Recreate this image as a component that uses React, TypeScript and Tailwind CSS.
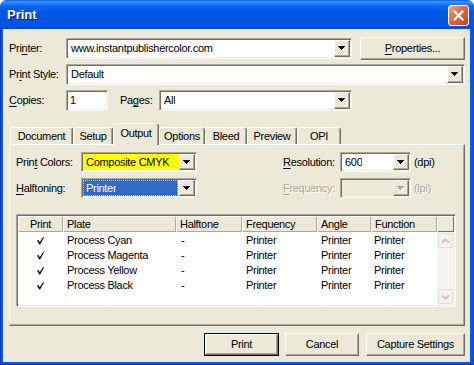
import React from "react";

const sunken =
  "border border-t-[#ACA899] border-l-[#ACA899] border-b-white border-r-white shadow-[inset_1px_1px_0_#716F64,inset_-1px_-1px_0_#F1EFE2]";
const raised =
  "border border-t-white border-l-white border-b-[#716F64] border-r-[#716F64] shadow-[inset_-1px_-1px_0_#ACA899]";

const U = ({ children }: { children: React.ReactNode }) => (
  <span className="underline underline-offset-[2px]">{children}</span>
);

const DropButton = ({ disabled = false }: { disabled?: boolean }) => (
  <div className={`flex w-[16px] shrink-0 items-center justify-center bg-[#ECE9D8] ${raised}`}>
    <svg width="8" height="5" viewBox="0 0 8 5" shapeRendering="crispEdges">
      {disabled && (
        <g fill="#fff">
          <rect x="1" y="1" width="7" height="1" />
          <rect x="2" y="2" width="5" height="1" />
          <rect x="3" y="3" width="3" height="1" />
          <rect x="4" y="4" width="1" height="1" />
        </g>
      )}
      <g fill={disabled ? "#ACA899" : "#000"}>
        <rect x="0" y="0" width="7" height="1" />
        <rect x="1" y="1" width="5" height="1" />
        <rect x="2" y="2" width="3" height="1" />
        <rect x="3" y="3" width="1" height="1" />
      </g>
    </svg>
  </div>
);

type ComboProps = {
  text?: string;
  className: string;
  bg?: string;
  selected?: boolean;
  disabled?: boolean;
};

const Combo = ({ text = "", className, bg = "bg-white", selected, disabled }: ComboProps) => (
  <div className={`flex shrink-0 p-[1px] ${sunken} ${bg} ${className}`}>
    <div
      className={`flex min-w-0 flex-1 items-center ${
        selected ? "mr-[1px] border border-dotted border-[#E8C070] bg-[#316AC5] pl-[2px] text-white" : "pl-[3px]"
      }`}
    >
      <span className="truncate">{text}</span>
    </div>
    <DropButton disabled={disabled} />
  </div>
);

const Button = ({ children, className, def }: { children: React.ReactNode; className: string; def?: boolean }) =>
  def ? (
    <div className={`flex border border-black ${className}`}>
      <div className={`flex flex-1 items-center justify-center bg-[#ECE9D8] ${raised}`}>{children}</div>
    </div>
  ) : (
    <div className={`flex items-center justify-center bg-[#ECE9D8] ${raised} ${className}`}>{children}</div>
  );

const tabs = [
  { label: "Document", w: "w-[63px]" },
  { label: "Setup", w: "w-[40px]" },
  { label: "Output", w: "w-[46px]", active: true },
  { label: "Options", w: "w-[46px]" },
  { label: "Bleed", w: "w-[42px]" },
  { label: "Preview", w: "w-[50px]" },
  { label: "OPI", w: "w-[44px]" },
];

const cols = [
  { label: "Print", w: "w-[45px]", center: true },
  { label: "Plate", w: "w-[113px]" },
  { label: "Halftone", w: "w-[66px]" },
  { label: "Frequency", w: "w-[75px]" },
  { label: "Angle", w: "w-[54px]" },
  { label: "Function", w: "w-[66px]" },
];

const plates = ["Process Cyan", "Process Magenta", "Process Yellow", "Process Black"];

const Check = () => (
  <svg width="7" height="8" viewBox="0 0 7 8">
    <path d="M0 3.6 L1.4 3 L2.7 5.2 L6.2 0 L7 0.6 L3.1 7.6 L2.3 7.6 Z" fill="#000" />
  </svg>
);

const Chevron = ({ down }: { down?: boolean }) => (
  <svg width="9" height="6" viewBox="0 0 9 6">
    <path
      d={down ? "M1 1.5 L4.5 4.5 L8 1.5" : "M1 4.5 L4.5 1.5 L8 4.5"}
      fill="none"
      stroke="#C8C5B8"
      strokeWidth="1.8"
    />
  </svg>
);

const ScrollBtn = ({ down }: { down?: boolean }) => (
  <div className="m-[1px] flex h-[15px] items-center justify-center rounded-[2px] border border-[#E2E0D6] bg-[#F3F2EC]">
    <Chevron down={down} />
  </div>
);

export default function App() {
  return (
    <div className="h-[365px] w-[474px] bg-white font-['Liberation_Sans',Arial,sans-serif] text-[11px] tracking-[-0.3px] text-black">
      <div className="flex h-full w-full flex-col overflow-hidden rounded-t-[7px] bg-[#0055E5]">
        {/* title bar */}
        <div className="flex h-[29px] shrink-0 items-center justify-between bg-[linear-gradient(180deg,#0A5DEB_0%,#3D95FF_6%,#2B84FB_11%,#0A66F0_20%,#0058E6_40%,#0054E3_75%,#0056E8_90%,#0048D2_100%)] pl-[7px] pr-[5px] pt-[1px]">
          <span className="text-[13px] font-bold tracking-normal text-white [text-shadow:1px_1px_0_#0A1E8C]">
            Print
          </span>
          <div className="flex h-[21px] w-[21px] items-center justify-center rounded-[3px] border border-white bg-[linear-gradient(135deg,#F0A486_0%,#E2693F_45%,#C7411B_100%)]">
            <svg width="11" height="11" viewBox="0 0 11 11">
              <path d="M1.5 1.5 L9.5 9.5 M9.5 1.5 L1.5 9.5" stroke="#fff" strokeWidth="2.2" strokeLinecap="square" />
            </svg>
          </div>
        </div>

        {/* frame + client */}
        <div className="flex flex-1 border-x border-b border-[#0A34C4] bg-[#0758E8] pb-[2px] pl-[2px] pr-[3px]">
          <div className="flex flex-1 flex-col bg-[#ECE9D8]">
            {/* row 1 */}
            <div className="mt-[8px] flex h-[23px] items-start pl-[6px]">
              <span className="w-[57px] self-center">
                Pri<U>n</U>ter:
              </span>
              <Combo text="www.instantpublishercolor.com" className="mt-[1px] h-[21px] w-[286px]" />
              <Button className="ml-[8px] h-[23px] w-[105px]">
                <span>
                  <U>P</U>roperties...
                </span>
              </Button>
            </div>
            {/* row 2 */}
            <div className="mt-[4px] flex h-[21px] items-center pl-[6px]">
              <span className="w-[57px]">
                Pr<U>i</U>nt Style:
              </span>
              <Combo text="Default" className="h-[21px] w-[399px]" />
            </div>
            {/* row 3 */}
            <div className="mt-[5px] flex h-[21px] items-center pl-[6px]">
              <span className="w-[57px]">
                <U>C</U>opies:
              </span>
              <div className={`flex h-[21px] w-[42px] items-center bg-white pl-[3px] ${sunken}`}>1</div>
              <span className="ml-[12px] w-[39px]">
                Pa<U>g</U>es:
              </span>
              <Combo text="All" className="h-[21px] w-[193px]" />
            </div>

            {/* tabs */}
            <div className="ml-[7px] mt-[12px] flex h-[21px] items-end">
              {tabs.map((t) =>
                t.active ? (
                  <div
                    key={t.label}
                    className={`relative z-10 -mb-[1px] flex h-[22px] items-center justify-center rounded-t-[3px] border-l border-r border-t border-l-white border-r-[#716F64] border-t-white bg-[#ECE9D8] pb-[3px] shadow-[inset_-1px_0_0_#ACA899] ${t.w}`}
                  >
                    {t.label}
                  </div>
                ) : (
                  <div
                    key={t.label}
                    className={`flex h-[17px] items-center justify-center rounded-t-[3px] border-l border-r border-t border-l-white border-r-[#716F64] border-t-white shadow-[inset_-1px_0_0_#ACA899] ${t.w}`}
                  >
                    {t.label}
                  </div>
                )
              )}
            </div>

            {/* panel */}
            <div className={`ml-[6px] mr-[5px] flex h-[182px] flex-col px-[6px] pt-[7px] ${raised}`}>
              <div className="flex h-[20px] items-center">
                <span className="w-[65px]">
                  Prin<U>t</U> Colors:
                </span>
                <Combo text="Composite CMYK" bg="bg-[#FFFF00]" className="h-[20px] w-[116px]" />
                <span className="ml-[86px] w-[57px]">
                  <U>R</U>esolution:
                </span>
                <Combo text="600" className="h-[20px] w-[71px]" />
                <span className="ml-[3px]">(dpi)</span>
              </div>
              <div className="mt-[6px] flex h-[20px] items-center">
                <span className="w-[65px]">
                  <U>H</U>alftoning:
                </span>
                <Combo text="Printer" selected className="h-[20px] w-[116px]" />
                <span className="ml-[86px] w-[57px] text-[#ACA899] [text-shadow:1px_1px_0_#fff]">
                  <U>F</U>requency:
                </span>
                <Combo disabled bg="bg-[#ECE9D8]" className="h-[20px] w-[71px]" />
                <span className="ml-[3px] text-[#ACA899] [text-shadow:1px_1px_0_#fff]">(lpi)</span>
              </div>

              {/* plate list */}
              <div className={`mt-[16px] flex h-[93px] w-[440px] flex-col bg-white p-[1px] ${sunken}`}>
                <div className="flex h-[16px] shrink-0 bg-[#ECE9D8]">
                  {cols.map((c) => (
                    <div
                      key={c.label}
                      className={`flex items-center shadow-[inset_1px_1px_0_#fff,inset_-1px_-1px_0_#ACA899] ${
                        c.center ? "justify-center" : "pl-[4px]"
                      } ${c.w}`}
                    >
                      {c.label}
                    </div>
                  ))}
                  <div className="flex-1 shadow-[inset_1px_1px_0_#fff,inset_-1px_-1px_0_#716F64]" />
                </div>
                <div className="flex flex-1">
                  <div className="flex flex-1 flex-col pt-[1px]">
                    {plates.map((p) => (
                      <div key={p} className="flex h-[15px] items-center">
                        <div className="flex w-[45px] justify-center">
                          <Check />
                        </div>
                        <div className="w-[113px] pl-[4px]">{p}</div>
                        <div className="w-[66px] pl-[5px]">-</div>
                        <div className="w-[75px] pl-[4px]">Printer</div>
                        <div className="w-[54px] pl-[4px]">Printer</div>
                        <div className="w-[66px] pl-[3px]">Printer</div>
                      </div>
                    ))}
                  </div>
                  <div className="flex w-[17px] flex-col justify-between bg-[#F5F4EF]">
                    <ScrollBtn />
                    <ScrollBtn down />
                  </div>
                </div>
              </div>
            </div>

            {/* buttons */}
            <div className="mr-[5px] mt-[7px] flex justify-end">
              <Button def className="h-[23px] w-[75px]">
                Print
              </Button>
              <Button className="ml-[6px] h-[23px] w-[74px]">Cancel</Button>
              <Button className="ml-[7px] h-[23px] w-[99px]">Capture Settings</Button>
            </div>
          </div>
        </div>
      </div>
    </div>
  );
}
